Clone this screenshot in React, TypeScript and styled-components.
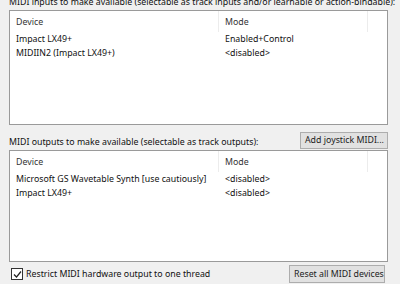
import styled, { createGlobalStyle } from "styled-components";

const GlobalStyle = createGlobalStyle`
    html, body {
        margin: 0;
        padding: 0;
        background: #f0f0f0;
    }
    body {
        font-family: "Noto Sans", "DejaVu Sans", sans-serif;
        font-size: 8.8px;
        color: #111;
    }
`;

type Device = { name: string, mode: string };

const inputs: Device[] = [
    { name: "Impact LX49+", mode: "Enabled+Control" },
    { name: "MIDIIN2 (Impact LX49+)", mode: "<disabled>" },
];

const outputs: Device[] = [
    { name: "Microsoft GS Wavetable Synth [use cautiously]", mode: "<disabled>" },
    { name: "Impact LX49+", mode: "<disabled>" },
];

const Page = styled.div`
    width: 400px;
    height: 284px;
    overflow: hidden;
    box-sizing: border-box;
    padding: 0 12px 0 9px;
    display: flex;
    flex-direction: column;
`;

const SectionLabel = styled.div`
    height: 14px;
    line-height: 14px;
    white-space: nowrap;
`;

const TopLabel = styled(SectionLabel)`
    margin-top: -5px;
    margin-bottom: 1px;
`;

const ListBox = styled.div<{ $height: number }>`
    height: ${p => p.$height}px;
    box-sizing: border-box;
    border: 1px solid #9a9a9a;
    background: #ffffff;
    display: flex;
    flex-direction: column;
`;

const HeaderRow = styled.div`
    display: flex;
    height: 21px;
    line-height: 22px;
    color: #333;
`;

const HeaderCell = styled.div<{ $width?: number }>`
    ${p => p.$width ? `width: ${p.$width}px;` : "flex: 1;"}
    padding-left: 6px;
    box-sizing: border-box;
    border-right: 1px solid #ececec;
`;

const Row = styled.div`
    display: flex;
    height: 14px;
    line-height: 14px;
`;

const Cell = styled.div<{ $width?: number }>`
    ${p => p.$width ? `width: ${p.$width}px;` : "flex: 1;"}
    padding-left: 6px;
    box-sizing: border-box;
    white-space: nowrap;
`;

const MidRow = styled.div`
    display: flex;
    justify-content: space-between;
    align-items: flex-end;
    height: 26px;
    padding-bottom: 1px;
    box-sizing: border-box;
`;

const Button = styled.button`
    font-family: inherit;
    font-size: 8.8px;
    color: #222;
    background: #e1e1e1;
    border: 1px solid #adadad;
    height: 17px;
    padding: 0 4px;
    line-height: 14px;
    white-space: nowrap;
`;

const JoystickButton = styled(Button)`
    align-self: flex-start;
    margin-top: 7px;
    width: 88px;
`;

const BottomRow = styled.div`
    display: flex;
    justify-content: space-between;
    align-items: center;
    margin-top: 2px;
    height: 20px;
`;

const CheckLabel = styled.label`
    display: flex;
    align-items: center;
    gap: 3px;
    padding-left: 2px;
    white-space: nowrap;
`;

const Box = styled.span`
    width: 10px;
    height: 10px;
    border: 1px solid #333;
    background: #fff;
    display: flex;
    align-items: center;
    justify-content: center;
`;

const ResetButton = styled(Button)`
    width: 96px;
    height: 18px;
    margin-right: 3px;
`;

const DeviceList = ({ devices, height }: { devices: Device[], height: number }) => (
    <ListBox $height={height}>
        <HeaderRow>
            <HeaderCell $width={209}>Device</HeaderCell>
            <HeaderCell $width={149}>Mode</HeaderCell>
        </HeaderRow>
        {devices.map(d => (
            <Row key={d.name}>
                <Cell $width={209}>{d.name}</Cell>
                <Cell>{d.mode}</Cell>
            </Row>
        ))}
    </ListBox>
);

export default function App() {
    return (
        <>
            <GlobalStyle />
            <Page>
                <TopLabel>MIDI inputs to make available (selectable as track inputs and/or learnable or action-bindable):</TopLabel>
                <DeviceList devices={inputs} height={116} />
                <MidRow>
                    <SectionLabel>MIDI outputs to make available (selectable as track outputs):</SectionLabel>
                    <JoystickButton>Add joystick MIDI...</JoystickButton>
                </MidRow>
                <DeviceList devices={outputs} height={113} />
                <BottomRow>
                    <CheckLabel>
                        <Box>
                            <svg width="9" height="9" viewBox="0 0 9 9">
                                <path d="M1 4.5 L3.5 7 L8 1.5" fill="none" stroke="#222" strokeWidth="1.2" />
                            </svg>
                        </Box>
                        Restrict MIDI hardware output to one thread
                    </CheckLabel>
                    <ResetButton>Reset all MIDI devices</ResetButton>
                </BottomRow>
            </Page>
        </>
    );
}
